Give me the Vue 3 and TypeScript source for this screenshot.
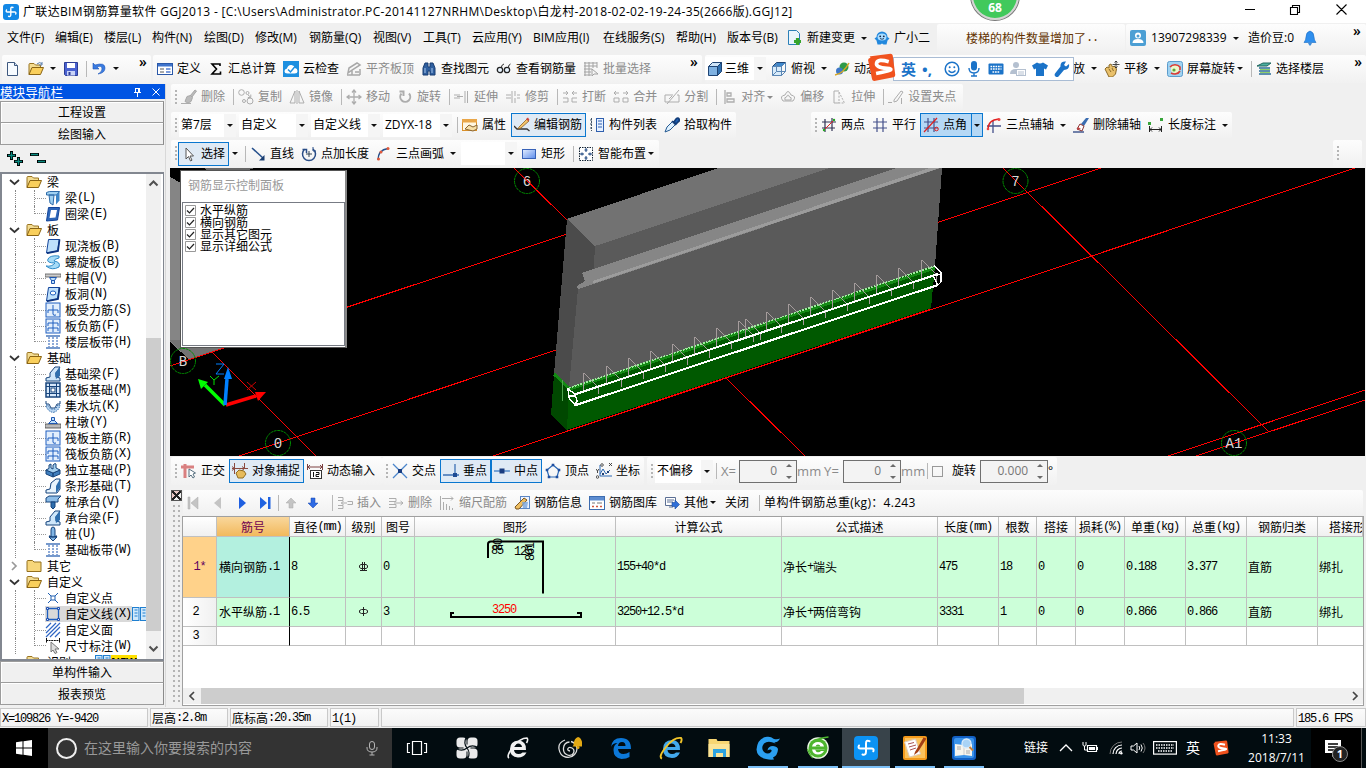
<script setup lang="ts">
import { h } from 'vue'

type Tool = {
  k: 'b' | 'sep' | 'combo' | 'gap' | 'more' | 'arr' | 'lab' | 'num' | 'check'
  i?: string
  t?: string
  w?: number
  on?: boolean
  hot?: boolean
  dis?: boolean
  a?: 'm' | 's'
}

const folder = '<path d="M1 13.5V3.5q0-1 1-1h4l1.5 1.5h5v3" fill="#f3dc92" stroke="#9a7420"/><path d="M1 13.5L4 6.500h11.500L12.500 13.500z" fill="#f9cf5c" stroke="#8a6414"/>'
const slab = '<path d="M3.5 1.5h11L12.5 13l-11 2z" fill="#bfe0fb" stroke="#12449a"/><path d="M14.5 1.5L13 13l-11 2.2" fill="none" stroke="#0d3480" stroke-width="1.8"/>'
const gridBox = '<rect x="1" y="1" width="14" height="14" fill="#e2eefc" stroke="#1f5fc0"/>'
const grid = '<path d="M5 1v14M11 1v14M1 5h14M1 11h14" stroke="#44508a" fill="none" stroke-width="1.2"/>'

const icons: Record<string, string> = {
  logo: '<rect width="16" height="16" rx="3" fill="#1388e6"/><path d="M10 3.500Q7.800 2.500 7.800 5v5.500q0 2.500-2.200 1.800M3.500 6q-1 2 1 2h7q2 0 1.200 2" fill="none" stroke="#fff" stroke-width="1.400" stroke-linecap="round"/>',
  newdoc: '<path d="M2.5 1.5h7l3 3v10h-10z" fill="#f7fbff" stroke="#3e587e"/><path d="M9.500 1.500v3h3" fill="#cfe0f4" stroke="#3e587e"/>',
  open: folder + '<path d="M9 3q3-3 5 0m0-2v3h-3" fill="none" stroke="#5b7fae"/>',
  save: '<path d="M1.500 1.500h13v13h-12l-1-1z" fill="#4a62d0" stroke="#2c3c94"/><path d="M4 2h8v5H4z" fill="#fff"/><path d="M4 10h8v4.500H4z" fill="#c9d3f7"/><path d="M5.500 11h2v3h-2z" fill="#2c3c94"/>',
  undo: '<path d="M2 2v6h6L6 6q5-2 5 2 0 3-4 5 7-1 7-6 0-6-10-3z" fill="#3a7be0" stroke="#1c55b8" stroke-width=".6"/>',
  define: '<rect x=".5" y="2.500" width="15" height="11" fill="#fff" stroke="#2a58a8"/><path d="M1 3h14v2.500H1z" fill="#3f74cc"/><path d="M3 8h4M3 11h4" stroke="#555"/><path d="M9 7h4.500v2H9zM9 10h4.500v2H9z" fill="#7d9ddc"/>',
  sigma: '<path d="M12 5V3H4l4.500 5L4 13h8.500v-2.500" fill="none" stroke="#000" stroke-width="1.600"/>',
  cloud: '<rect width="16" height="16" fill="#1d8fe0"/><path d="M4.500 12.500q-3 0-3-2.500 0-2 2.500-2.500Q5 3.500 8.500 4q3 .5 3.500 3 2.500.5 2.500 3t-3 2.500z" fill="#fff"/><path d="M5 8.500l2.500 2.500L12 5.500" fill="none" stroke="#1d8fe0" stroke-width="1.500"/>',
  align: '<path d="M2 12l1-5 8-5 3 2-8 5zM1 14h13M6 9v5M14 8v6M9 11h4" fill="none" stroke="#a8a8a8" stroke-width="1.500"/>',
  find: '<path d="M2 7l2-5h3v4h2V2h3l2 5v7h-5v-4H7v4H2z" fill="#2f5f9f" stroke="#183c70"/><path d="M4 7v5M11 7v5" stroke="#a9c8ee"/>',
  glasses: '<path d="M5 7Q6 3 8 3M12 7q1-4 2.500-4" fill="none" stroke="#333"/><circle cx="4" cy="9" r="2.700" fill="#e8f4ff" stroke="#222" stroke-width="1.300"/><circle cx="11" cy="9" r="2.700" fill="#e8f4ff" stroke="#222" stroke-width="1.300"/>',
  batch: '<path d="M1 2h13M1 5h13M1 8h8M1 11h7M1 14h7M2 1v14M6 1v14M10 1v6M14 1v6M9 8l6 5h-4l-2 2z" fill="none" stroke="#a2a2a2"/>',
  cube: '<path d="M1.500 5.500l4-4h9l-4 4z" fill="#cfe5f8" stroke="#1f4474"/><path d="M1.500 5.500h9v9h-9z" fill="#7fb2e2" stroke="#1f4474"/><path d="M10.500 5.500l4-4v9l-4 4z" fill="#2f6fae" stroke="#1f4474"/>',
  topview: '<path d="M1.500 5.500l4-4h9l-4 4z" fill="#3f88cc" stroke="#1f4474"/><path d="M2 6h8v8H2z" fill="#d8ebfa"/><path d="M1.500 5.500h9v9h-9zM10.500 5.500l4-4v9l-4 4zM5.500 2v8.500h9M5.500 10.500l-4 4" fill="none" stroke="#5a86b4"/>',
  orbit: '<circle cx="10" cy="6" r="4.500" fill="#2f9a48"/><circle cx="5.500" cy="10" r="3.500" fill="#3e78c8"/><path d="M1 14Q9 13 15 2" fill="none" stroke="#d9a820" stroke-width="1.500"/>',
  hand: '<path d="M1 8l2-2 2 1 0-3 2-1 1.500 3 2-1 2 3-1 5-3 3H5z" fill="#e9c06a" stroke="#8b6a28"/><path d="M5 8l2 3M8 7l1.500 3" stroke="#8b6a28"/><path d="M12 0v7M8.500 3.500h7M10.500 1.500L12 0l1.500 1.500M10.500 5.500L12 7l1.500-1.500" fill="none" stroke="#333" stroke-width=".9"/>',
  spin: '<rect x=".5" y=".5" width="15" height="15" rx="2" fill="#9fd3f2" stroke="#5c9ccc"/><circle cx="8" cy="8" r="4" fill="#eef6c8"/><path d="M3 6a6 5 0 0 1 10 0v3M13 10a6 5 0 0 1-9 2" fill="none" stroke="#dd3b32" stroke-width="1.600"/><circle cx="7" cy="9" r="1.600" fill="#5ba53c"/>',
  floors: '<path d="M1 5l6-3h8l-4 3z" fill="#4db0a0" stroke="#1f665e"/><path d="M3 7h11M3 10h11M3 13h12" stroke="#2b6d98" stroke-width="1.600"/><path d="M4 8.500h10M4 11.500h10" stroke="#8fd06a"/>',
  change: '<path d="M1.500.5h8l3 3v11h-11z" fill="#eaf5fd" stroke="#2b80b8"/><path d="M10.500 8v7M7 11.500h7" stroke="#36a52c" stroke-width="3.200"/>',
  robot: '<path d="M2.500 7a5.500 5.500 0 0 1 11 0l2 1.500-2 2-1 4H9.500l-1.500-1-1.500 1h-3l-1-4-2-2z" fill="#2288dd"/><ellipse cx="8" cy="7" rx="4.500" ry="3.500" fill="#a9dcff"/><circle cx="6.200" cy="6.300" r=".9" fill="#124"/><circle cx="9.800" cy="6.300" r=".9" fill="#124"/><path d="M6 8.500q2 1.500 4 0" fill="none" stroke="#124" stroke-width=".8"/>',
  user: '<rect width="16" height="16" rx="2" fill="#4c9fd4"/><circle cx="8" cy="5.500" r="3" fill="#fff"/><path d="M2.500 13q0-4 5.500-4t5.500 4z" fill="#fff"/><circle cx="8" cy="6" r="1.500" fill="#4c9fd4"/>',
  bell: '<path d="M8 1q4 1 4 6 0 3 2 5.500H2Q4 10 4 7q0-5 4-6zM6.500 13.500h3L8 15.500z" fill="#2f8fee" stroke="#176cc4" stroke-width=".6"/>',
  brush: '<path d="M0 14.500h10" /><path d="M9 7l5-6 1.500 1-4.500 6M4 12.500l2-5 3.500-1 2 2-1.500 4-3 1.500z" fill="#bbb" stroke="#a8a8a8"/>',
  copy: '<circle cx="3.500" cy="3.500" r="2.800"/><circle cx="9.500" cy="4" r="1.500"/><circle cx="12" cy="12" r="3"/><circle cx="6" cy="12" r="1.500"/><path d="M10 6l2.500 2M12.800 5.500v3h-3"/>',
  mirror: '<path d="M6 2v12H1zM10 2v12h5zM8 1v14"/>',
  move: '<path d="M8 2v12M2 8h12M6 3.500L8 1l2 2.500M6 12.500L8 15l2-2.500M3.500 6L1 8l2.500 2M12.500 6L15 8l-2.500 2" stroke-width="1.300"/>',
  rotate: '<path d="M4.500 4.500a5 5 0 1 0 7.500 0M2.500 2.500h4V7" stroke-width="2"/>',
  extend: '<path d="M0 6h6M0 9h6M3 7.500h6M11 2v12M13.500 2v12"/>',
  trim: '<path d="M1 6h5M1 9h5M7 2v12M10 2v5M10 9v5M12 6h3M12 9h3"/>',
  split: '<path d="M1 4h5l-2-2M6 4L4 6M15 4h-5l2-2M10 4l2 2M1 9h5v4H1M15 9h-5v4h5"/>',
  merge: '<path d="M6 4H1l2-2M1 4l2 2M10 4h5l-2-2M15 4l-2 2M1 9h5v4H1zM15 9h-5v4h5z"/>',
  divide: '<path d="M1 6h8M13 6h2M1 6v7h14V6M3 15L15 1M5 10l3-3"/>',
  alignl: '<path d="M4 1v14M6 4h4v3H6zM6 10h7v3H6z" stroke-width="1.300"/>',
  offset: '<path d="M3 12q-4-5 2-6 3-7 6 0 6 1 2 6zM5 11q-1-3 1.500-3 1.500-4 3 0Q12 8 11 11z"/>',
  stretch: '<path d="M8 2H3v12h5"/><path d="M8 3l5.500 11H8V3" stroke-dasharray="2 1.300"/>',
  grip: '<path d="M0 13.500h4M13.500 9v6M6 11l7-9 2 1-6 9-3 1z"/>',
  props: '<rect x=".5" y="2.500" width="14" height="11" fill="#fff6e0" stroke="#d9902a"/><path d="M0 2h15v3.500H0z" fill="#e9a648"/><path d="M3 12l4-4 4 2 4-2v4l-4 2z" fill="#f7e0a8" stroke="#8a6430"/>',
  editbar: '<path d="M0 9l3 3h10l2.500 2" stroke="#333" fill="none" stroke-width="1.300"/><path d="M5 10l8-8 2 2-8 7-3 1z" fill="#f3c46a" stroke="#8c5f24" stroke-width=".8"/><path d="M12 2l2-1.500L15.500 3 14 4z" fill="#d2423a"/>',
  list: '<path d="M1 3h3M1 7h3M1 11h3M2.500 1v13" stroke="#456" stroke-dasharray="2 1"/><rect x="7.500" y="1.500" width="7" height="13" fill="#e6f0ff" stroke="#2f5fae"/><path d="M9 4h4M9 7h4M9 10h4" stroke="#2f5fae"/>',
  pick: '<path d="M1 15l2-5 6-6 3 3-6 6z" fill="#dff1ff" stroke="#245a92"/><path d="M8 4l4 4M10 5l2-3q2-2 3 0t-1 3l-2 2z" stroke="#123c78" stroke-width="1.700" fill="#1d5fb4"/>',
  axis2: '<path d="M4 2v13M11 1v13M1 5h14M1 11h13" stroke="#335" fill="none" stroke-width="1.200"/><path d="M2 14L14 2" stroke="#e02020"/><circle cx="3" cy="13" r="1.200" fill="#2a2"/><circle cx="13" cy="3" r="1.200" fill="#2a2"/>',
  axisp: grid,
  axisa: grid + '<path d="M1 15L14 1" stroke="#e02020" stroke-width="1.200"/><circle cx="13.500" cy="12" r="1.800" fill="none" stroke="#e02020"/>',
  axis3: '<path d="M7 4v12M1 9h14" stroke="#44508a" stroke-width="1.300"/><path d="M2 12Q2 3 13 2" fill="none" stroke="#e02020" stroke-width="1.300"/><circle cx="2" cy="12" r="1.300" fill="#e44"/><circle cx="13" cy="2.500" r="1.500" fill="#e44"/>',
  erase: '<path d="M0 15h11" stroke="#445a90" stroke-width="1.500"/><path d="M8 7l5-6h3l-5 8z" fill="#3a6cb0"/><path d="M4 12l3-5 4 2-2 5z" fill="#fff" stroke="#833"/><path d="M4 13l1-3 3 2z" fill="#c04040"/>',
  dim: '<path d="M1.500 9v6M13.500 9v6M2 12.500h11M4 10.500l-2 2 2 2M11 10.500l2 2-2 2" fill="none" stroke="#222"/><path d="M0 5h3v3H0zM12 1h3v3h-3z" fill="#37a63a"/>',
  cursor: '<path d="M5 2v11l2.500-2.500L9.500 15l1.500-.8L9 10h3.500z" fill="#fff" stroke="#555"/>',
  line: '<path d="M2 2l11 10" stroke="#26508c" stroke-width="1.500"/><path d="M14.500 9v5.500H9z" fill="#183c70"/>',
  lenpt: '<path d="M4 3a6.500 6.500 0 1 0 8 0M1.500 3.500h4V7" fill="none" stroke="#284c86" stroke-width="1.500"/><path d="M8 5v6M5 8h6" stroke="#345"/><path d="M12 1v4h3" fill="none" stroke="#284c86"/>',
  arc: '<path d="M2 14Q2 4 12 2.500" fill="none" stroke="#26508c" stroke-width="1.400"/><circle cx="2.500" cy="13" r="1.500" fill="#e0583a"/><circle cx="5" cy="6" r="1.500" fill="#e0583a"/><circle cx="12" cy="2.500" r="1.500" fill="#e0583a"/>',
  rect: '<defs><linearGradient id="rg" x1="0" y1="0" x2="1" y2="1"><stop stop-color="#e4eeff"/><stop offset="1" stop-color="#5c8cec"/></linearGradient></defs><rect x="1.500" y="3.500" width="13" height="9" fill="url(#rg)" stroke="#3862b8"/>',
  smart: '<rect x="1.500" y="1.500" width="13" height="13" fill="#fff" stroke="#123" stroke-dasharray="1.500 1"/><path d="M8 2v4M6.500 4h3M8 10v4M6.500 12h3M2 8h4M4 6.500v3M10 8h4M12 6.500v3" stroke="#123c78"/>',
  ortho: '<path d="M4 1v14M0 4h13" stroke="#d98080" stroke-width="3"/><path d="M8 6v8l2-2 2 3 1.500-1-1.500-3 2.500-1z" fill="#fff" stroke="#577080"/>',
  snap: '<path d="M2.500 0v11M12.500 0v6M0 5.500h16M0 3.500l2.500 2-2.500 2M10 3.500l2.500 2-2.500 2" fill="none" stroke="#8a4a40"/><path d="M4 10l3-3 5 1 2 3-3 4H6z" fill="#e6bb5c" stroke="#916d22"/>',
  dyn: '<path d="M.5 1v6M15.500 1v6M1 4h14M3 2L1 4l2 2M13 2l2 2-2 2" fill="none" stroke="#7c4040"/><rect x="3.500" y="7.500" width="11" height="8" fill="#fff" stroke="#333"/><path d="M6.500 9v5M9 9.500h3v2H9v2h3" fill="none" stroke="#111"/>',
  cross: '<path d="M1 1l14 14M15 1L1 15" stroke="#4c86cc" stroke-width="1.300"/><rect x="6" y="6" width="4" height="4" fill="#183c80"/>',
  perp: '<path d="M0 12h16M12 1v11" stroke="#3c70b4" stroke-width="1.300"/><rect x="10" y="10" width="4" height="4" fill="#1d4b94"/>',
  mid: '<path d="M0 8h16" stroke="#5c90cc" stroke-width="1.600"/><rect x="5.500" y="5.500" width="5" height="5" fill="#183c80"/>',
  vertex: '<path d="M8 2l6 5-2 7H4L2 7z" fill="none" stroke="#2c68b4" stroke-width="1.200"/><path d="M6.700 .7h2.600v2.600H6.700zM.7 5.700h2.600v2.600H.7zM12.700 5.700h2.600v2.600h-2.600zM2.700 12.700h2.600v2.600H2.700zM10.700 12.700h2.600v2.600h-2.600z" fill="#1f4fa0"/>',
  coord: '<path d="M4 2v11h12M4 11l3-5 3 5 4-4" fill="none" stroke="#2c68b4"/><path d="M6 10h2v2H6zM11 8h2v2h-2z" fill="#1f3f74"/><path d="M0 6l1.500 2L3 6M1.500 8v2M13 0l3 3M16 0l-3 3" fill="none" stroke="#333" stroke-width=".9"/><circle cx="6" cy="2" r="1.300" fill="none" stroke="#333" stroke-width=".8"/><circle cx="1.500" cy="14" r="1.300" fill="none" stroke="#333" stroke-width=".8"/>',
  first: '<path d="M3 2h2v12H3zM13 2v12L6 8z" fill="#c4c4c4" stroke="#adadad" stroke-width=".5"/>',
  prev: '<path d="M11 2v12L4 8z" fill="#c4c4c4"/>',
  next: '<path d="M5 2v12l7-6z" fill="#1f5fe0"/>',
  last: '<path d="M3 2v12l7-6zM11 2h2.500v12H11z" fill="#1f62e0"/>',
  up: '<path d="M8 3l5 5h-3v5H6V8H3z" fill="#c4c4c4" stroke="#aaa" stroke-width=".5"/>',
  down: '<path d="M8 13l5-5h-3V3H6v5H3z" fill="#2e6ae4" stroke="#1a48ae" stroke-width=".5"/>',
  ins: '<path d="M1 2.500h5v3H1M1 10.500h5v3H1M10.500 6.500h5v3h-5M4 8h6M6.500 6L4.500 8l2 2"/>',
  del: '<path d="M1 3.500h7v3H1M1 9.500h7v3H1M6 8h9M12.500 6L15 8l-2.500 2"/>',
  scale: '<path d="M1.500 1v14M3 3.500h11M12 1.500l2 2-2 2M4.500 7v8M7.500 9v6M10.500 11v4M13.500 13v2"/>',
  info: '<rect x="6.500" y="1.500" width="9" height="12" fill="#eef4ff" stroke="#5b86c4"/><path d="M1 12l9-9 3 2-8 9H2z" fill="#efbf62" stroke="#7c5620"/><path d="M8 7h6l-1 6H9z" fill="#7ba5dc" opacity=".8"/>',
  lib: '<rect x=".5" y="1.500" width="15" height="13" fill="#fff" stroke="#3c6cb0"/><path d="M1 2h14v3.500H1z" fill="#5c8cd0"/><path d="M3 8h3M8 8h5" stroke="#777"/><path d="M3 11.500h2M7 11.500h2M11 11.500h2" stroke="#d05840" stroke-width="1.500"/>',
  other: '<path d="M1.500 2.500h10v8h-10z" fill="#fff" stroke="#5b6f94"/><path d="M3 5h7M3 7h6M5 12h4" stroke="#5b6f94"/><path d="M8 7.500h3V5l4.500 4.500L11 14v-2.500H8z" fill="#2f6fd8" stroke="#174a9c" stroke-width=".6"/>',
  folder,
  folderc: '<path d="M1 13.500V3.500q0-1 1-1h4.500L8 4h7v9.500z" fill="#f7d67a" stroke="#94701e"/>',
  beam: '<path d="M1.500 2.500l3-1h10l-3 3.500h-10zM4 5h5l-1 10-3-2z" fill="#9fd1f2" stroke="#2d6aa8"/><path d="M11 5l3.500-3.500v9L11 14.500z" fill="#3d85c6"/>',
  ring: '<path d="M3.500 1.500h11L12.500 14l-11 1z" fill="#2e66b8" stroke="#12449a"/><path d="M6 4h6l-1.500 7.500-6 .5z" fill="#fff"/>',
  slab,
  spiral: '<path d="M14 2Q5 1 3 5t7 4q-3 4-9 3 6 5 13 1 2-5-5-6 0-2 5-3z" fill="#a5dbf7" stroke="#2e8bc9"/>',
  cap: '<path d="M0 4h16v3H0z" fill="#ccc" stroke="#555" stroke-width=".8"/><path d="M4.500 7.500h7l-2 3h-3zM6.500 10.500h3v3h-3z" fill="#bfe0fb" stroke="#1f57b0"/>',
  hole: slab + '<ellipse cx="8" cy="7" rx="2.800" ry="2" fill="#fff" stroke="#1f5fc0"/>',
  mainbar: gridBox + '<path d="M3 8h10M8 3v9q0 2 3 1M3 8v3M13 8v3" fill="none" stroke="#1f5fc0"/>',
  negbar: gridBox + '<path d="M3 5h10M3 5v3M13 5v3M3 10h10M3 10v3M13 10v3M8 2v12" fill="none" stroke="#1f5fc0"/>',
  band: '<path d="M1 2h14M1 14h14" stroke="#4a78bc" stroke-width="1.600"/><path d="M4 3v10M12 3v10M8 3v10" stroke="#1f57b0" stroke-dasharray="2 1"/>',
  fbeam: '<path d="M5 7l5-6h5l-4 6v4l4 1v3H1v-3l4-1z" fill="#cfe7fa" stroke="#17447c"/><path d="M10 7l5-6v9l-4 3z" fill="#2f6fae"/>',
  raft: '<rect x="1" y="1" width="14" height="14" fill="#d7e8fa" stroke="#17447c" stroke-width="1.500"/><path d="M4.500 1v14M11.500 1v14M1 4.500h14M1 11.500h14" stroke="#17447c"/><rect x="6" y="6" width="4" height="4" fill="#fff" stroke="#17447c"/>',
  pit: '<path d="M1 3v3h3l2 4h4l2-4h3V3" fill="none" stroke="#17447c"/><path d="M1 7h2l2.500 4h5L13 7h2q-1 6-7 7.500Q2 13 1 7z" fill="#b7d4f0" stroke="#2b68aa" stroke-dasharray="1.500 1"/>',
  pier: '<path d="M0 10h16v4H0z" fill="#bbb" stroke="#444" stroke-width=".8"/><path d="M6.500 3.500h3v3h-3zM6.500 6.500h3l3 3h-9z" fill="#bfe0fb" stroke="#1f57b0"/>',
  single: '<path d="M1 8l7 3v4l-7-3zM15 8l-7 3v4l7-3z" fill="#3f7fbe" stroke="#17447c"/><path d="M1 8l3-1.500V3l2-1v4l2 1V3l2-1.500 1 .5v4l4 2-7 3z" fill="#a5d0f0" stroke="#17447c"/>',
  strip: '<path d="M1 15v-3l4-1 1-6 5-4h4v10l-3 4z" fill="#e8f4fd" stroke="#17447c"/><path d="M11 8l4-7v9l-4 5z" fill="#2f6fae"/>',
  pilecap: '<path d="M1 4l3-2h12l-3 3v3H1z" fill="#8dbde8" stroke="#17447c"/><path d="M6 8h4v5l-2 2-2-2z" fill="#2f6fae" stroke="#17447c"/>',
  pile: '<path d="M6 4q0-3 2-3t2 3v7h2l-4 4-4-4h2z" fill="#7fb4e4" stroke="#17447c"/><path d="M4 10q4 2 8 0" fill="none" stroke="#17447c" stroke-width="1.500"/>',
  cpoint: '<path d="M3 3l10 10M13 3L3 13" stroke="#1f5fb0"/><rect x="6" y="6" width="4" height="4" fill="#fff" stroke="#1f5fb0"/>',
  cline: '<path d="M2.500 2.500h11v11h-11z" fill="none" stroke="#1f5fc0" stroke-width="1.300"/><path d="M1.500 1.500h2v2h-2zM12.500 1.500h2v2h-2zM1.500 12.500h2v2h-2zM12.500 12.500h2v2h-2z" fill="#d8e8ff" stroke="#1f4fb0"/>',
  cface: '<path d="M1 6l5-5M1 11L11 1M1 15L15 1M5 15L15 5M10 15l5-5" stroke="#2f66c4" stroke-width="1.200"/>',
  cdim: '<path d="M1.500 0v5M14.500 0v5M1 2.500h14" stroke="#111" stroke-dasharray="2 .6"/><path d="M6 4v10l2-2 2 3.500 2-1L10 11h4z" fill="#ddd" stroke="#777"/>',
  pane: '<rect x=".5" y="1.500" width="6.500" height="13" fill="#cfe8fb" stroke="#1f7fd0"/><rect x="8.500" y="1.500" width="6.500" height="13" fill="#cfe8fb" stroke="#1f7fd0"/><path d="M2.500 4h3M2.500 7h3M2.500 10h3M10.500 4h3M10.500 7h3M10.500 10h3" stroke="#1f7fd0"/>',
  win: '<path d="M0 2.200L6.500 1.300V7.500H0zM7.500 1.200L16 0v7.500H7.500zM0 8.500h6.500v6.200L0 13.800zM7.500 8.500H16V16l-8.500-1.200z" fill="#fff"/>',
  smic: '<rect x="5.500" y="1.500" width="5" height="8" rx="2.500" fill="none" stroke="#b5b5b5"/><path d="M3 7v1q0 4 5 4t5-4V7M8 12v3M5.500 15h5" fill="none" stroke="#b5b5b5"/>',
  up2: '<path d="M2 11l6-6 6 6" fill="none" stroke="#fff" stroke-width="1.300"/>',
  batt: '<path d="M5.500 5.500h9v6h-9zM15.500 7v3" fill="none" stroke="#fff" stroke-width="1.200"/><path d="M7 7h6v3H7z" fill="#fff"/><path d="M1 2v3q0 1 1.500 1T4 5V2M2.500 6v4H5" fill="none" stroke="#fff"/>',
  wifi: '<path d="M2 14A12 12 0 0 1 14 2" fill="none" stroke="#777"/><path d="M5 14a9 9 0 0 1 9-9M8 14a6 6 0 0 1 6-6M11 14a3 3 0 0 1 3-3" fill="none" stroke="#fff" stroke-width="1.200"/><circle cx="13.300" cy="13.300" r="1.200" fill="#fff"/>',
  sound: '<path d="M1 6h2.500L7 3v10L3.500 10H1z" fill="none" stroke="#fff"/><path d="M9 6q1.500 2 0 4M11 4.500q2.500 3.500 0 7" fill="none" stroke="#fff"/><path d="M13 3q4 5 0 10" fill="none" stroke="#777"/>',
  sogou: '<path d="M2 2.500Q1 2 2 1.800L13 .4q1 0 1.200 1l1.400 10.800q0 1-1 1.200L4 15.500q-1 0-1.200-1L.6 4q0-1 1-1.200z" fill="#f0521e"/><path d="M12 4.800Q6 3 5.300 5.500T11 8.500 5 11.300" fill="none" stroke="#fff" stroke-width="2"/>',
  smile: '<circle cx="8" cy="8" r="6.800" fill="none" stroke="#1b73c8" stroke-width="1.500"/><circle cx="5.700" cy="6.300" r="1" fill="#1b73c8"/><circle cx="10.300" cy="6.300" r="1" fill="#1b73c8"/><path d="M4.500 9.500q3.500 4 7 0" fill="none" stroke="#1b73c8" stroke-width="1.300"/>',
  bmic: '<rect x="5" y="0" width="6" height="9.500" rx="3" fill="#1b73c8"/><path d="M3 7q0 5 5 5t5-5M8 12v3M5 15h6" fill="none" stroke="#1b73c8" stroke-width="1.400"/>',
  bkey: '<rect x=".5" y="2.500" width="15" height="11" rx="1" fill="#1b73c8"/><path d="M2.500 5.500h11M2.500 8h11M4.500 11h7" stroke="#fff" stroke-width="1.300" stroke-dasharray="1.700 .8"/>',
  person: '<circle cx="6" cy="4" r="3" fill="#b4c0d0"/><path d="M0 13q0-5 6-5 3 0 4 1v4z" fill="#b4c0d0"/><rect x="6.500" y="8.500" width="9" height="6" fill="#fff" stroke="#b4c0d0"/><path d="M8 11h6M8 13h6" stroke="#b4c0d0"/>',
  shirt: '<path d="M5 1.500q3 2 6 0l5 3-2 4-2-1v7.500H4V7.500l-2 1-2-4z" fill="#1b73c8"/>',
  wrench: '<path d="M15 3l-3 2.500-2-1.500 2-3.500q-6-.5-5.500 5L1 12.500q-1 2 .5 3t3 0L10 9q6-.5 5-6z" fill="#1b73c8"/>',
  t_view: '<path d="M7.500 5.500h9v13h-9zM5 7.500H2.500v9H5M19 7.500h2.500v9H19" fill="none" stroke="#fff" stroke-width="1.200"/>',
  t_fan: '<g fill="#ebebeb"><rect x="1.500" y="1.500" width="10" height="10" rx="3.500"/><rect x="12.500" y="1.500" width="10" height="10" rx="3.500"/><rect x="1.500" y="12.500" width="10" height="10" rx="3.500"/><rect x="12.500" y="12.500" width="10" height="10" rx="3.500"/><rect x="8.500" y="8.500" width="7" height="7"/></g><path d="M12 12Q8 7 11.500 1M12 12q5-4 11-.5M12 12q4 5 .5 11M12 12q-5 4-11 .5" stroke="#051015" stroke-width="1.200" fill="none"/>',
  t_ie: '<path d="M20 14H8q.5 4 4.500 4 2.500 0 4-1.500h4Q18 21.500 12 21.500 4 21 4 13t8.500-8.500Q20.500 5 20 14zM8 11h8q-.5-3.500-4-3.500T8 11z" fill="#f2f2f2"/><path d="M3 22Q0 20 7 11T21 2q1.500 1.500-.5 5" fill="none" stroke="#f2f2f2" stroke-width="1.600"/>',
  t_swirl: '<path d="M12 15q-3-.5-2-2.500t4-.5 1.500 5-6 2-4-7 6-6M13 5.500q4 1 5.500 5t-2 8-9 2.500-6.500-8 6-9" fill="none" stroke="#ddd" stroke-width="1.300"/><path d="M15.500 9q.5-7 4.500-8 4 1 4.500 8l1 1.500h-11z" fill="#e3a913"/><circle cx="20" cy="11.500" r="1.500" fill="#e3a913"/>',
  t_edge: '<path d="M2 11Q3 2 12 2q10 0 10 11H9q.5 5 5.500 5 3 0 6-2v5q-3 2-8 2-8-1-8-9 0-5 4-7-5 0-6.500 4zM9 10h7.500q0-4-3.500-4T9 10z" fill="#0c78d8"/>',
  t_ie2: '<path d="M21 14H8.500q.5 4 4.500 4 2.500 0 4-1.500h4Q18.500 22 13 22q-9-.5-9-9t9-9q8.500.5 8 10zM8.500 11h8q-.5-3.500-4-3.500t-4 3.500z" fill="#43a9ec"/><path d="M3 22.500Q-1 21 7 11T22 2q1.500 1.500-.5 5" fill="none" stroke="#f2c52a" stroke-width="1.900"/>',
  t_file: '<path d="M1.500 3h8l1 2h12v16h-21z" fill="#f7d673"/><path d="M1.500 8h21v13h-21z" fill="#fbe497"/><path d="M6 13h13v8h-3v-4H9v4H6z" fill="#2da3e0"/>',
  t_g: '<path d="M24 2.500Q22 7 17.500 6q2 .8 2 1.500Q12 4 8 7.500 4.500 12 8 16q4 3 7 0 1.500-2-.5-2.500-2 0-3 1Q12 10 17 10q5 .5 5 3.500-.5 6-5 8l1 2q-4 .5-8-.5Q1 21 .5 13.500 1.500 2 11 .8q4-.5 6.500 2Q21 4 24 2.500z" fill="#2b9ff0"/>',
  t_green: '<circle cx="12" cy="12" r="10.800" fill="#eef8e8"/><circle cx="12" cy="12" r="9.500" fill="#4db52e"/><path d="M6 10.500Q7 6 12 6t6 4.500zM6 13.500h12.500Q17 18.500 12 18.500T6 13.500z" fill="#fff"/><path d="M9.500 10.500Q10 8.500 12 8.500t2.500 2zM9 13.500q1 2.700 3 2.700t3-1.200h3.500v-1.500z" fill="#4db52e"/><path d="M1.500 13Q4 20 7 22M22.500 1Q12 2 8 6" fill="none" stroke="#4db52e" stroke-width="1.300"/>',
  t_ggj: '<rect x="0" y="0" width="24" height="24" rx="4" fill="#0c93f4"/><path d="M15.500 5.200Q12 3.500 12 7.500v8q0 4-3.500 3M5 9.500q-1.500 3 1.500 3h11q3 0 1.800 2.800" fill="none" stroke="#fff" stroke-width="2" stroke-linecap="round"/>',
  t_note: '<rect width="24" height="24" rx="2" fill="#f39a1c"/><rect x="2" y="2" width="20" height="20" fill="#fbc25c"/><path d="M1.500 6l11-3 5 15-11 3z" fill="#fff" stroke="#dcb"/><path d="M5 8l6-1.500M6 11l7-2M7 14l6-2" stroke="#a55"/><path d="M12 16L20.500 1.500l3 1L15 16l-4 3z" fill="#a43f14"/>',
  t_doc: '<rect width="24" height="24" rx="3" fill="#1260c4"/><rect x="2" y="2" width="20" height="20" rx="2" fill="#3a93ea"/><path d="M3 8l9 1 8-1v12l-8-1-9 1z" fill="#f7f5ee"/><path d="M12 9v10" stroke="#ccc"/><path d="M5 11h4M5 13h4M14 15h4M14 17h4" stroke="#aaa"/><circle cx="14.500" cy="7.500" r="4.500" fill="#a9d3f6" stroke="#dcecfa" stroke-width="1.300"/><path d="M17.500 11l3.500 3.500" stroke="#c8803a" stroke-width="2"/>',
  t_key: '<rect x=".6" y="5.600" width="22.800" height="12.500" fill="none" stroke="#fff" stroke-width="1.200"/><path d="M3 9h18M3 12h18M5 15h14" stroke="#fff" stroke-width="1.300" stroke-dasharray="1.500 1"/>',
  t_msg: '<path d="M4 4h16v13h-5l-4 4v-4H4z" fill="#fff"/><path d="M7 8h10M7 11h10M7 14h6" stroke="#000" stroke-width="1.300"/>',
}

const Ico = (p: { n: string; s?: number }) =>
  h('svg', { class: 'ico', viewBox: `0 0 ${p.s ?? 16} ${p.s ?? 16}`, width: p.s ?? 16, height: p.s ?? 16, innerHTML: icons[p.n] ?? '' })
Ico.props = ['n', 's']

/* Full-width glyphs keep 12px, half-width runs are set on a 6px pitch. */
const Song = (p: { t: string }) =>
  h('span', { class: 'song' }, (p.t.match(/[\x20-\x7e]+|[^\x20-\x7e]+/g) ?? []).map((r) =>
    h(/[\x20-\x7e]/.test(r[0]) ? 'i' : 'b', r)))
Song.props = ['t']

const Tools = (p: { items: Tool[] }) => p.items.map((x) => {
  const width = x.w ? { width: x.w + 'px' } : undefined
  if (x.k === 'sep') return h('span', { class: 'tsep' })
  if (x.k === 'gap') return h('span', { class: 'tgap', style: width })
  if (x.k === 'more') return h('span', { class: 'tmore', style: width }, '»')
  if (x.k === 'arr') return h('span', { class: 'tarr', style: width }, [h('u', { class: 'tri' })])
  if (x.k === 'lab') return h('span', { class: ['tlab', { dis: x.dis, wide: !x.w }], style: width }, x.t)
  if (x.k === 'check') return h('span', { class: 'tcheck' })
  if (x.k === 'num') return h('span', { class: 'tnum', style: width }, [h('span', x.t), h('em', [h('u', { class: 'tri up' }), h('u', { class: 'tri' })])])
  if (x.k === 'combo') return h('span', { class: 'tcombo', style: width }, [x.i ? h(Ico, { n: x.i }) : null, h('span', x.t), h('em', [h('u', { class: 'tri' })])])
  return h('span', { class: ['tbtn', { on: x.on, hot: x.hot, dis: x.dis }, x.a], style: width }, [
    x.i ? h(Ico, { n: x.i }) : null,
    x.t ? h('span', x.t) : null,
    x.a ? h(x.hot ? 'em' : 'span', [h('u', { class: 'tri' })]) : null,
  ])
})
Tools.props = ['items']

const b = (i: string, t: string, o: Partial<Tool> = {}): Tool => ({ k: 'b', i, t, ...o })
const d = (i: string, t: string, o: Partial<Tool> = {}): Tool => b(i, t, { dis: true, ...o })
const sep: Tool = { k: 'sep' }
const gap = (w: number): Tool => ({ k: 'gap', w })

const menus = [
  ['文件(F)', 48], ['编辑(E)', 49], ['楼层(L)', 48], ['构件(N)', 52], ['绘图(D)', 51], ['修改(M)', 54], ['钢筋量(Q)', 64],
  ['视图(V)', 50], ['工具(T)', 49], ['云应用(Y)', 61], ['BIM应用(I)', 70], ['在线服务(S)', 73], ['帮助(H)', 51], ['版本号(B)', 60],
] as const

const fileTools: Tool[] = [b('newdoc', '', { w: 23 }), b('open', '', { a: 's', w: 35 }), b('save', '', { w: 22 }), { k: 'sep' }, b('undo', '', { a: 's', w: 48 }), { k: 'more' }]
const mainTools: Tool[] = [gap(4), b('define', '定义'), b('sigma', '汇总计算'), b('cloud', '云检查'), d('align', '平齐板顶'), b('find', '查找图元'), b('glasses', '查看钢筋量'), d('batch', '批量选择', { w: 107 }), { k: 'more' }]
const viewTools: Tool[] = [{ k: 'combo', i: 'cube', t: '三维', w: 61 }, gap(5), b('topview', '俯视', { a: 's' }), b('orbit', '动态观察', { w: 207 }), b('hand', '缩放', { a: 's' }), b('hand', '平移', { a: 's' }), b('spin', '屏幕旋转', { a: 'm' }), sep, b('floors', '选择楼层')]
const modifyTools: Tool[] = [
  d('brush', '删除'), sep, d('copy', '复制'), d('mirror', '镜像'), sep, d('move', '移动'), d('rotate', '旋转'), sep, d('extend', '延伸'), d('trim', '修剪'), sep,
  d('split', '打断'), d('merge', '合并'), d('divide', '分割'), sep, d('alignl', '对齐', { a: 'm' }), d('offset', '偏移'), d('stretch', '拉伸'), sep, d('grip', '设置夹点'),
]
const compTools: Tool[] = [
  { k: 'combo', t: '第7层', w: 57 }, gap(3), { k: 'combo', t: '自定义', w: 69 }, gap(3), { k: 'combo', t: '自定义线', w: 69 }, gap(3), { k: 'combo', t: 'ZDYX-18', w: 69 }, gap(4),
  sep, b('props', '属性', { w: 52 }), b('editbar', '编辑钢筋', { on: true }), b('list', '构件列表'), b('pick', '拾取构件'),
]
const axisTools: Tool[] = [b('axis2', '两点'), b('axisp', '平行'), b('axisa', '点角', { hot: true, a: 's' }), b('axis3', '三点辅轴', { a: 's' }), b('erase', '删除辅轴'), b('dim', '长度标注', { a: 's', w: 84 })]
const drawTools: Tool[] = [
  b('cursor', '选择', { on: true }), { k: 'arr', w: 12 }, sep, b('line', '直线'), b('lenpt', '点加长度'), b('arc', '三点画弧', { a: 's', w: 85 }),
  { k: 'combo', t: '', w: 56 }, gap(4), b('rect', '矩形'), sep, b('smart', '智能布置', { a: 'm', w: 81 }),
]
const snapTools: Tool[] = [b('ortho', '正交'), b('snap', '对象捕捉', { on: true }), b('dyn', '动态输入')]
const pointTools: Tool[] = [b('cross', '交点'), b('perp', '垂点', { on: true }), b('mid', '中点', { on: true }), b('vertex', '顶点'), b('coord', '坐标', { w: 48 })]
const offsetTools: Tool[] = [
  { k: 'combo', t: '不偏移', w: 58 }, gap(2), sep, { k: 'lab', t: 'X=', w: 18, dis: true }, { k: 'num', t: '0', w: 58 }, { k: 'lab', t: 'mm', w: 27, dis: true },
  { k: 'lab', t: 'Y=', w: 19, dis: true }, { k: 'num', t: '0', w: 58 }, { k: 'lab', t: 'mm', w: 25, dis: true }, sep, { k: 'check' }, { k: 'lab', t: '旋转', w: 28 }, { k: 'num', t: '0.000', w: 68 }, { k: 'lab', t: '°', w: 9 },
]
const barTools: Tool[] = [
  b('first', '', { w: 25 }), b('prev', '', { w: 24 }), b('next', '', { w: 23 }), b('last', '', { w: 20 }), sep, b('up', '', { w: 22 }), b('down', '', { w: 26 }), sep,
  d('ins', '插入'), d('del', '删除'), d('scale', '缩尺配筋'), b('info', '钢筋信息'), b('lib', '钢筋图库'), b('other', '其他', { a: 'm', w: 61 }), { k: 'lab', t: '关闭', w: 33 }, sep, { k: 'lab', t: '单构件钢筋总重(kg)：4.243' },
]

type Node = { t: string; i: string; p?: boolean; shut?: boolean; last?: boolean; sel?: boolean }
const leaf = (i: string, t: string, o: Partial<Node> = {}): Node => ({ i, t, ...o })
const top = (t: string, shut = false): Node => ({ i: shut ? 'folderc' : 'folder', t, p: true, shut })
const tree: Node[] = [
  top('梁'), leaf('beam', '梁(L)'), leaf('ring', '圈梁(E)', { last: true }),
  top('板'), leaf('slab', '现浇板(B)'), leaf('spiral', '螺旋板(B)'), leaf('cap', '柱帽(V)'), leaf('hole', '板洞(N)'), leaf('mainbar', '板受力筋(S)'), leaf('negbar', '板负筋(F)'), leaf('band', '楼层板带(H)', { last: true }),
  top('基础'), leaf('fbeam', '基础梁(F)'), leaf('raft', '筏板基础(M)'), leaf('pit', '集水坑(K)'), leaf('pier', '柱墩(Y)'), leaf('mainbar', '筏板主筋(R)'), leaf('negbar', '筏板负筋(X)'), leaf('single', '独立基础(P)'),
  leaf('strip', '条形基础(T)'), leaf('pilecap', '桩承台(V)'), leaf('fbeam', '承台梁(F)'), leaf('pile', '桩(U)'), leaf('band', '基础板带(W)', { last: true }),
  top('其它', true), top('自定义'), leaf('cpoint', '自定义点'), leaf('cline', '自定义线(X)', { sel: true }), leaf('cface', '自定义面'), leaf('cdim', '尺寸标注(W)', { last: true }),
]

const heads = ['', '筋号', '直径(mm)', '级别', '图号', '图形', '计算公式', '公式描述', '长度(mm)', '根数', '搭接', '损耗(%)', '单重(kg)', '总重(kg)', '钢筋归类', '搭接形']
const rows = [
  ['1*', '横向钢筋.1', '8', '', '0', '', '155+40*d', '净长+端头', '475', '18', '0', '0', '0.188', '3.377', '直筋', '绑扎'],
  ['2', '水平纵筋.1', '6.5', '', '3', '', '3250+12.5*d', '净长+两倍弯钩', '3331', '1', '0', '0', '0.866', '0.866', '直筋', '绑扎'],
  ['3', '', '', '', '', '', '', '', '', '', '', '', '', '', '', ''],
]
const checks = ['水平纵筋', '横向钢筋', '显示其它图元', '显示详细公式']
const ticks = [[584, 373], [607, 366], [629, 358], [651, 351], [673, 344], [695, 337], [717, 328], [739, 321], [746, 319], [767, 312], [789, 304], [811, 297], [833, 290], [855, 283], [877, 275], [899, 268], [922, 260]]
const tickPath = ticks.map(([x, y]) => `M${x - 1} ${y + 18}L${x} ${y}l14 14v7`).join('')
const bubbles = [[183, 361, 'B'], [278, 443, '0'], [527, 181, '6'], [1015.5, 181, '7'], [1234, 443, 'A1']] as const
const apps = [
  { n: 't_view', w: 49 }, { n: 't_fan', w: 51 }, { n: 't_ie', w: 52 }, { n: 't_swirl', w: 52 }, { n: 't_edge', w: 50 }, { n: 't_ie2', w: 49 }, { n: 't_file', w: 48 },
  { n: 't_g', w: 50, run: true }, { n: 't_green', w: 49, run: true }, { n: 't_ggj', w: 48, act: true }, { n: 't_note', w: 49, run: true }, { n: 't_doc', w: 49, run: true },
]
</script>

<template>
  <div class="win">
    <header class="title">
      <Ico n="logo" /><span class="ttext">广联达BIM钢筋算量软件 GGJ2013 - [C:\Users\Administrator.PC-20141127NRHM\Desktop\白龙村-2018-02-02-19-24-35(2666版).GGJ12]</span>
      <svg class="winbtns" width="102" height="12" viewBox="0 0 102 12"><path d="M0 5.500h10M45.500 3.500h7v7h-7zM47.500 3v-1.500h7v7H53M91.500 .5l10 10M101.500 .5l-10 10" fill="none" stroke="#000" stroke-width="1.100" /></svg>
      <span class="ball">68</span>
    </header>

    <nav class="menu">
      <span v-for="m in menus" :key="m[0]" class="mi" :style="{ width: m[1] + 'px' }">{{ m[0] }}</span>
      <Tools :items="[b('change', '新建变更', { a: 's' }), b('robot', '广小二')]" />
      <div class="grp notice"><Song t="楼梯的构件数量增加了.." /></div>
      <div class="grp account">
        <Ico n="user" /><span class="phone">13907298339</span><u class="tri"></u><span class="bean">造价豆:0</span><Ico n="bell" /><span class="tmore">»</span>
      </div>
    </nav>

    <div class="row r1">
      <div class="grp g1"><Tools :items="fileTools" /></div>
      <div class="grp g2"><Tools :items="mainTools" /></div>
      <div class="grp g3"><Tools :items="viewTools" /><span class="tmore">»</span></div>
    </div>

    <div class="body">
      <aside>
        <div class="ahead"><span>模块导航栏</span><svg width="30" height="10" viewBox="0 0 30 10"><path d="M4.500 1v4M8.500 1v4M4 1.500h5M3 5.500h7M6.500 6v4M7.500 1v4M21.500 1.500l7 7M28.500 1.500l-7 7" stroke="#fff" fill="none" /></svg></div>
        <div class="abtn"><Song t="工程设置" /></div>
        <div class="abtn"><Song t="绘图输入" /></div>
        <div class="pm"><svg width="42" height="16" viewBox="0 0 42 16"><path d="M4.500 0v9M0 4.500h9M11.500 6v9M7 10.500h9M23 3.500h9M30 10.500h9" stroke="#000" stroke-width="3" /><path d="M4.500 1v7M1 4.500h7M11.500 7v7M8 10.500h7M24 3.500h7M31 10.500h7" stroke="#0a8a80" stroke-width="1.300" /></svg></div>
        <div class="tree">
          <div class="nodes">
            <div v-for="(n, k) in tree" :key="k" class="node" :class="{ par: n.p, last: n.last, sel: n.sel }">
              <template v-if="n.p">
                <svg class="chev" width="23" height="16" viewBox="0 0 23 16"><path :d="n.shut ? 'M9 4l4 4-4 4' : 'M7 6l4.500 4L16 6'" fill="none" :stroke="n.shut ? '#999' : '#333'" stroke-width="1.700" /></svg>
              </template>
              <template v-else><i class="v0"></i><i class="v1"></i><i class="v2"></i></template>
              <span class="cell"><Ico :n="n.i" /><Song :t="n.t" /></span>
              <Ico v-if="n.sel" n="pane" class="mk" />
            </div>
            <div class="node par cut"><span class="pad"></span><span class="cell"><Ico n="folder" /><Song t="识别" /></span><Ico n="pane" class="mk" /><span class="new">NEW</span></div>
          </div>
          <div class="vbar">
            <svg width="15" height="16" viewBox="0 0 15 16"><path d="M3.500 10.500l4-4 4 4" fill="none" stroke="#505050" stroke-width="2" /></svg>
            <div class="thumb"></div>
            <svg width="15" height="16" viewBox="0 0 15 16"><path d="M3.500 5.500l4 4 4-4" fill="none" stroke="#505050" stroke-width="2" /></svg>
          </div>
        </div>
        <div class="abtn"><Song t="单构件输入" /></div>
        <div class="abtn"><Song t="报表预览" /></div>
      </aside>

      <main>
        <div class="row r2"><div class="grp"><i class="handle"></i><Tools :items="modifyTools" /></div></div>
        <div class="row r3">
          <div class="grp comp"><i class="handle h8"></i><Tools :items="compTools" /></div>
          <div class="grp"><i class="handle"></i><Tools :items="axisTools" /></div>
        </div>
        <div class="row r4">
          <div class="grp"><i class="handle"></i><Tools :items="drawTools" /></div>
          <div class="grp stub"><i class="handle"></i></div>
        </div>

        <div class="view">
          <svg width="1195" height="288" viewBox="170 168 1195 288">
            <g shape-rendering="crispEdges">
              <path d="M204 168h50l-7 3h-40z" fill="#666" />
              <path d="M170 177l11 6v170l-11-12z" fill="#858585" />
              <path d="M170 341l20 19 35-12v-8h-55z" fill="#737373" />
              <g stroke="#f00" fill="none">
                <path d="M170 366L567 234M239 456L1101 168M493 456L1355 168M1168 456l197-66M1196 456l169-56" />
                <path d="M514 168l53 52M1003 168l265 263M726 378l79 78M212 352l104 104" />
              </g>
              <path d="M567 219L718 168H830L595 246z" fill="#727272" />
              <path d="M595 246L830 168H942L935 266 569 388 578 288 593 283z" fill="#5a5a5a" />
              <path d="M567 219l28 27-2 38-15 5-9 99-15-14z" fill="#4b4b4b" />
              <path d="M582 273L896 168h45L578 289l-1-3 8-5z" fill="#868686" />
              <path d="M593 281L929 168h10L593 283.500z" fill="#9c9c9c" />
              <path d="M554 374l15 14-2 42-16-15z" fill="#004800" />
              <path d="M569 388L935 266l-4 42-364 122z" fill="#005900" />
              <path d="M554 374l16 15 365-121" fill="none" stroke="#148a14" stroke-width="3" />
              <path d="M569 388L935 266" stroke="#9fe79f" stroke-width="1.500" stroke-dasharray="2 1" />
              <path :d="tickPath" fill="none" stroke="#a59c9c" />
              <path d="M562 380v21" stroke="#4fa34f" />
              <path d="M568 396h6l2-2L938 274M576 405L938 285" fill="none" stroke="#fff" stroke-width="2" />
              <path d="M568 389l7 5 2 7-2 4-6-7zM934 266l7 6v10l-3 3-5-9 8-2" fill="none" stroke="#fff" stroke-width="1.400" />
              <path d="M567 431L931 309" stroke="#f00" />
            </g>
            <g v-for="c in bubbles" :key="c[2]">
              <circle :cx="c[0]" :cy="c[1]" r="12.500" fill="none" stroke="#008a00" stroke-dasharray="3 .6" />
              <text :x="c[0]" :y="c[1] + 5" class="bub">{{ c[2] }}</text>
            </g>
            <g stroke-width="3.500">
              <path d="M225 405l-20-20" stroke="#0f0" /><path d="M198 379l10 3-7 7z" fill="#0f0" />
              <path d="M226 405l30-9" stroke="#f00" /><path d="M266 392l-8 9-3-9z" fill="#f00" />
              <path d="M225 405l2-26" stroke="#0080ff" /><path d="M228 367l4 12h-8z" fill="#0080ff" />
            </g>
            <path d="M216 364h8l-8 10h8" fill="none" stroke="#0080ff" /><path d="M210 376l4 4 5-4M214 380v5" fill="none" stroke="#0d0" /><path d="M247 382l9 8M256 382l-9 8" stroke="#c00" />
            <path d="M517 171l18 17" stroke="#f00" />
          </svg>
          <div class="panel">
            <div class="ptitle">钢筋显示控制面板</div>
            <div class="plist">
              <div v-for="c in checks" :key="c" class="chk"><svg width="11" height="11" viewBox="0 0 11 11"><path d="M.5.5h10v10H.5z" fill="#fff" stroke="#999" /><path d="M2 5.500L4.500 8 9 3" fill="none" stroke="#222" stroke-width="1.200" /></svg><Song :t="c" /></div>
            </div>
          </div>
        </div>

        <div class="row r5">
          <div class="grp"><i class="handle"></i><Tools :items="snapTools" /></div>
          <div class="grp"><i class="handle"></i><Tools :items="pointTools" /></div>
          <div class="grp offs"><i class="handle h8"></i><Tools :items="offsetTools" /></div>
        </div>

        <section class="detail">
          <div class="split"><span class="x"></span><i></i></div>
          <div class="dcol">
            <div class="grp dtools"><Tools :items="barTools" /></div>
            <div class="sheet">
              <div class="grid">
                <div v-for="(t, k) in heads" :key="'h' + k" class="th" :class="{ cur: k === 1, left: k === 15 }"><Song :t="t" /></div>
                <template v-for="(r, ri) in rows" :key="ri">
                  <div v-for="(c, ci) in r" :key="ci" class="td" :class="['row' + ri, { rh: ci === 0, name: ci === 1, dia: ci === 2, mid: ci === 3 || ci === 5 }]">
                    <svg v-if="ci === 3 && ri < 2" width="11" height="10" viewBox="0 0 11 10"><path :d="ri ? 'M5.500 0v9M3.500 2.500h4l2 1v2l-2 1h-4l-2-1v-2z' : 'M4.500 0v8M6.500 0v8M3 2.500h5l1.500 1v2L8 6.500H3l-1.500-1v-2zM2 8.500h7'" fill="none" stroke="#222" /></svg>
                    <svg v-else-if="ci === 5 && ri === 0" width="200" height="60" viewBox="415 537 200 60">
                      <path d="M488 558v-14q0-2.500 3-2.500h52v52" fill="none" stroke="#000" stroke-width="2" />
                      <text x="491" y="554" class="st">85</text><text x="514" y="555" class="st">125</text>
                      <text transform="translate(502 551) rotate(-90)" class="st">80</text><text transform="translate(534 561) rotate(-90)" class="st">861</text>
                    </svg>
                    <svg v-else-if="ci === 5 && ri === 1" width="200" height="28" viewBox="415 598 200 28">
                      <path d="M454 613h-3v4h130v-4h-4" fill="none" stroke="#000" stroke-width="2" /><text x="492" y="613" class="st" fill="#f00">3250</text>
                    </svg>
                    <Song v-else :t="c" />
                  </div>
                </template>
              </div>
              <div class="hbar">
                <svg width="18" height="16" viewBox="0 0 18 16"><path d="M11 4L7 8l4 4" fill="none" stroke="#444" stroke-width="1.700" /></svg><div class="hthumb"></div>
                <svg width="18" height="16" viewBox="0 0 18 16"><path d="M8 4l4 4-4 4" fill="none" stroke="#444" stroke-width="1.700" /></svg>
              </div>
            </div>
          </div>
        </section>
      </main>
    </div>

    <footer class="status">
      <div class="s1"><Song t="X=109826 Y=-9420" /></div><div class="s2"><Song t="层高:2.8m" /></div><div class="s3"><Song t="底标高:20.35m" /></div><div class="s4"><Song t="1(1)" /></div><div class="s5"></div><div class="s6"><Song t="185.6 FPS" /></div>
    </footer>

    <div class="task">
      <div class="start"><Ico n="win" /></div>
      <div class="search"><i class="cortana"></i><span>在这里输入你要搜索的内容</span><Ico n="smic" /></div>
      <div v-for="a in apps" :key="a.n" class="app" :class="{ act: a.act, run: a.run }" :style="{ width: a.w + 'px' }"><Ico :n="a.n" :s="24" /></div>
      <div class="tray"><span class="lk">链接</span><Ico n="up2" class="c1" /><Ico n="batt" class="c2" /><Ico n="wifi" class="c3" /><Ico n="sound" class="c4" /><Ico n="t_key" :s="24" class="c5" /><span class="ying">英</span><Ico n="sogou" /></div>
      <div class="clock"><span>11:33</span><span>2018/7/11</span></div>
      <div class="msg"><Ico n="t_msg" :s="24" /><b>1</b></div>
    </div>

    <div class="ime">
      <Ico n="sogou" class="big" />
      <div class="imebox"><b>英</b><span class="punc">•,</span><Ico n="smile" /><Ico n="bmic" /><Ico n="bkey" /><Ico n="person" /><Ico n="shirt" /><Ico n="wrench" /></div>
    </div>
  </div>
</template>

<style>
body { margin: 0; }
.ico { display: block; flex: none; }
.song { display: inline-flex; white-space: pre; font: 12px/16px "Liberation Mono", "Noto Sans CJK SC", monospace; }
.song i { font-style: normal; letter-spacing: -1.2px; }
.song b { font-weight: 400; font-family: "Noto Sans CJK SC", sans-serif; }
.tri { width: 0; height: 0; border: 3px solid transparent; border-top: 3px solid #111; border-bottom: 0; flex: none; }
.tri.up { border-top: 0; border-bottom: 3px solid #111; }
.tbtn { display: flex; align-items: center; flex: none; box-sizing: border-box; height: 24px; padding-right: 7px; }
.tbtn .ico + span { margin-left: 4px; }
.tbtn.m > span:last-child { margin-left: 2px; }
.tbtn.s > span:last-child { margin-left: 6px; }
.tbtn span { display: flex; align-items: center; }
.tbtn.on { margin: 0 3px 0 -3px; padding: 0 3px 0 2px; border: 1px solid #0a77cf; background: #dfeaf5; }
.tbtn.hot { margin: 0 3px 0 -3px; padding: 0 0 0 2px; border: 1px solid #0a77cf; background: #b5d8f5; }
.tbtn.hot em { display: flex; align-items: center; justify-content: center; width: 10px; height: 22px; margin-left: 4px; border-left: 1px solid #0a77cf; }
.tbtn.dis, .tlab.dis { color: #8b8b8b; }
.tbtn.dis .ico { fill: none; stroke: #adadad; }
.tbtn.dis .tri { border-top-color: #8b8b8b; }
.tsep { width: 1px; height: 16px; margin: 0 4px 0 1px; background: #b8b8b8; flex: none; }
.tgap { flex: none; }
.tmore { font-size: 14px; font-weight: 600; align-self: flex-start; line-height: 14px; flex: none; }
.tarr { display: flex; }
.tlab { flex: none; }
.tlab.dis { font-size: 13px; }
.tlab.wide { letter-spacing: .3px; }
.tcheck { width: 9px; height: 9px; border: 1px solid #999; margin-right: 9px; flex: none; }
.tcombo { display: flex; align-items: center; box-sizing: border-box; height: 23px; background: #fff; padding-left: 2px; flex: none; }
.tcombo .ico + span { margin-left: 2px; }
.tcombo em { margin-left: auto; width: 12px; height: 23px; background: #f5f5f5; display: flex; align-items: center; justify-content: center; }
.tnum { display: flex; align-items: center; justify-content: flex-end; box-sizing: border-box; height: 23px; border: 1px solid #707070; background: #f3f3f3; color: #777; flex: none; }
.tnum em { display: flex; flex-direction: column; gap: 9px; margin: 0 4px 0 9px; opacity: .6; }
</style>

<style scoped>
.win { position: relative; width: 1366px; height: 768px; overflow: hidden; background: #f0f0f0; color: #000; font: 12px/16px "Open Sans", "Noto Sans CJK SC", sans-serif; white-space: nowrap; display: flex; flex-direction: column; }
.title { height: 23px; flex: none; background: #fff; display: flex; align-items: center; padding-left: 3px; position: relative; }
.ttext { margin-left: 4px; letter-spacing: .32px; }
.winbtns { margin-left: auto; margin-right: 19px; margin-top: -3px; }
.ball { position: absolute; left: 971px; top: -29px; width: 44px; height: 18px; padding-top: 27px; border: 2px solid #d5d5d5; outline: 1px solid #777; border-radius: 50%; background: #41c95c; color: #fff; font-weight: 700; font-size: 12px; line-height: 16px; text-align: center; }
.menu { height: 30px; flex: none; display: flex; align-items: center; padding-left: 7px; position: relative; }
.mi { flex: none; }
.grp { display: flex; align-items: center; background: linear-gradient(#fdfdfd, #f1f1f1); flex: none; border-radius: 2px; }
.notice { width: 159px; height: 28px; padding-left: 29px; color: #633300; }
.account { width: 236px; height: 28px; margin-left: 1px; padding-left: 4px; }
.phone { margin-left: 5px; width: 82px; } .bean { margin: 0 7px 0 9px; width: 47px; }
.account .tmore { margin-left: 35px; }
.row { display: flex; align-items: center; flex: none; }
.r1 { height: 31px; padding-left: 2px; }
.r1 .grp { height: 28px; }
.g1 { width: 146px; padding-left: 3px; box-sizing: content-box; }
.g2 { width: 549px; margin-left: 2px; }
.g3 { width: 661px; margin-left: 3px; }
.g3 > .tmore { margin-left: auto; margin-right: 4px; }
.body { display: flex; height: 623px; flex: none; }
aside { width: 165px; flex: none; display: flex; flex-direction: column; border-right: 1px solid #d8d8d8; }
.ahead { height: 15px; background: #0054e3; color: #fff; display: flex; align-items: center; justify-content: space-between; font: 12.600px/15px "Noto Sans CJK SC", sans-serif; padding-right: 4px; margin-bottom: 2px; flex: none; }
.abtn { height: 20px; display: flex; align-items: center; justify-content: center; border: 1px solid #9c9c9c; border-right-color: #8a8a8a; box-shadow: inset 1px 1px #fff; margin: 0 1px 0 0; flex: none; }
.abtn + .abtn { border-top: 0; height: 21px; }
.pm { height: 27px; padding: 6px 0 0 7px; box-sizing: border-box; flex: none; }
.tree { height: 485px; border: 1px solid #828790; border-width: 2px 1px 2px 2px; margin-right: 1px; background: #fff; display: flex; overflow: hidden; flex: none; }
.nodes { width: 144px; overflow: hidden; padding-left: 1px; box-sizing: border-box; }
.node { display: flex; height: 16px; align-items: center; }
.node .song { line-height: 16px; }
.cell { display: flex; align-items: center; gap: 4px; height: 16px; }
.par .cell { gap: 5px; }
.node:not(.par) .cell { margin-left: -1px; }
.sel .cell { background: #d9d9d9; padding-right: 1px; }
.mk { margin-left: 1px; }
.sel .mk { margin-left: 0; }
.pad { width: 23px; }
.chev { flex: none; }
.v0 { width: 12px; flex: none; } .v1 { width: 18px; height: 16px; border-left: 1px dotted #888; flex: none; }
.v2 { width: 11px; height: 16px; border-left: 1px dotted #888; flex: none; background: repeating-linear-gradient(90deg, #999 0 1px, transparent 1px 2px) 0 8px / 100% 1px no-repeat; }
.last .v2 { height: 8px; align-self: flex-start; background-position: 0 7px; }
.cut .mk { margin-left: 24px; }
.new { background: #ffe000; font-weight: 700; line-height: 14px; font-size: 11px; }
.vbar { width: 15px; margin-right: 1px; background: #f0f0f0; display: flex; flex-direction: column; padding: 1px 0 0; }
.thumb { height: 293px; background: #cdcdcd; margin-top: 147px; margin-bottom: 10px; flex: none; }
main { flex: 1; display: flex; flex-direction: column; min-width: 0; padding-left: 4px; }
main .grp { margin-left: 1px; }
.handle { width: 2px; height: 15px; margin: 0 4px; background: repeating-linear-gradient(#b5b5b5 0 2px, transparent 2px 4px); flex: none; }
.handle.h8 { margin-right: 2px; }
.r2 { height: 27px; } .r2 .grp { height: 26px; margin-top: -1px; }
.r3 { height: 28px; } .r3 .grp { height: 26px; }
.comp { margin-right: 74px; width: 565px; }
.r4 { height: 29px; } .r4 .grp { height: 27px; }
.r4 .stub { width: 29px; margin-left: auto; margin-right: 4px; }
.view { position: relative; width: 1195px; height: 288px; background: #000; flex: none; }
.view > svg { display: block; }
.bub { fill: #d8d8d8; font: 14px "Liberation Mono", monospace; text-anchor: middle; }
.panel { position: absolute; left: 10px; top: 2px; width: 164px; height: 176px; background: #fff; border: 1px solid #555; border-right: 2px solid #888; display: flex; flex-direction: column; }
.ptitle { height: 31px; line-height: 30px; padding-left: 7px; color: #999; }
.plist { flex: 1; border: 1px solid #777b84; margin: 0 0 1px 1px; padding: 1px 0 0 2px; }
.chk { display: flex; align-items: center; height: 12px; gap: 4px; }
.chk svg { flex: none; }
.r5 { height: 34px; align-items: flex-start; padding-top: 1px; box-sizing: border-box; } .r5 .grp { height: 28px; }
.r5 .grp + .grp { margin-left: 0; }
.r5 .grp + .grp.offs { margin-left: 3px; }
.offs .tnum { font-size: 13px; }
.detail { display: flex; flex: 1; }
.split { width: 12px; display: flex; flex-direction: column; align-items: center; }
.split .x { width: 9px; height: 9px; border: 1px solid #555; background: linear-gradient(45deg, transparent 44%, #222 44% 56%, transparent 56%), linear-gradient(-45deg, transparent 44%, #222 44% 56%, #e9c8c4 56%); }
.split i { width: 7px; flex: 1; margin: 4px 0 5px; background: repeating-linear-gradient(90deg, transparent 0 2px, #f0f0f0 2px 5px), repeating-linear-gradient(#b4b4b4 0 2px, transparent 2px 5px); }
.dcol { flex: 1; display: flex; flex-direction: column; min-width: 0; }
main .dtools { height: 25px; margin: 0 3px 1px 1px; padding-left: 2px; width: 1178px; }
.sheet { width: 1180px; height: 188px; border: 1px solid #a0a0a0; background: #fff; display: flex; flex-direction: column; }
.grid { display: grid; grid-template-columns: 34px 73px 56px 36px 33px 201px 166px 156px 61px 38px 39px 49px 61px 61px 71px 45px; grid-template-rows: 20px 61px 29px 19px; }
.th, .td { border-right: 1px solid #c0c0c0; border-bottom: 1px solid #c0c0c0; display: flex; align-items: center; box-sizing: border-box; overflow: hidden; }
.th { justify-content: center; background: linear-gradient(#fff, #f0f0f0); }
.th.left { justify-content: flex-start; padding-left: 11px; }
.cur { background: linear-gradient(#f9d79c, #f2b95c); color: #700050; }
.td { padding-left: 1px; }
.row0, .row1 { background: #ccffd9; }
.rh { background: linear-gradient(90deg, #fff, #f0f0f0); justify-content: center; padding: 0 8px 0 0; }
.rh.row0 { background: #ffd28a; color: #600060; padding-right: 0; }
.name { border-right: 1px solid #000; padding-left: 2px; }
.name.row0 { background: #b3f0df; }
.mid { padding: 0; justify-content: center; }
.td:nth-child(16n) { border-right: 0; }
.st { font: 12px "Liberation Mono", monospace; letter-spacing: -1.2px; }
.hbar { display: flex; height: 16px; margin-top: auto; margin-bottom: 1px; background: #f0f0f0; }
.hthumb { width: 823px; background: #cdcdcd; margin-right: auto; }
.status { height: 21px; flex: none; display: flex; gap: 2px; padding-top: 1px; box-sizing: border-box; }
.status div { box-sizing: border-box; border: 1px solid #c9c9c9; background: linear-gradient(#fbfbfb, #f2f2f2); padding: 1px 0 0 1px; overflow: hidden; height: 19px; }
.s1 { width: 148px; } .s2, .s3, .s4 { width: 78px; } .s3 { width: 98px; } .s4 { width: 49px; } .s5 { flex: 1; } .s6 { width: 70px; }
.task { height: 40px; flex: none; background: #020c10; display: flex; color: #fff; }
.start { width: 48px; background: #000; display: flex; align-items: center; justify-content: center; flex: none; }
.search { width: 344px; background: #333; display: flex; align-items: center; color: #999; font-size: 14px; flex: none; }
.cortana { width: 17px; height: 17px; border: 2.500px solid #eee; border-radius: 50%; margin: 0 6px 0 8px; }
.search span { margin-left: 1px; }
.search .ico { margin-left: auto; margin-right: 12px; }
.app { display: flex; align-items: center; justify-content: center; position: relative; flex: none; }
.app.act { background: #38434a; border-bottom: 2px solid #7cc0f7; box-sizing: border-box; padding-top: 2px; }
.app.run { background: linear-gradient(#7cc0f7, #7cc0f7) center bottom / 40px 2px no-repeat; }
.tray { width: 254px; display: flex; align-items: center; box-sizing: border-box; padding-left: 36px; flex: none; }
.lk { width: 34px; } .c1 { margin-right: 8px; } .c2 { margin-right: 10px; } .c3 { margin-right: 6px; } .c4 { margin-right: 7px; } .ying { font-size: 14px; margin: 0 13px 0 9px; }
.clock { width: 69px; display: flex; flex-direction: column; align-items: center; justify-content: center; line-height: 19px; flex: none; }
.msg { width: 51px; box-sizing: border-box; border-right: 1px solid #555; background: #000; display: flex; align-items: center; padding-left: 10px; position: relative; flex: none; }
.msg b { position: absolute; left: 21px; top: 18px; width: 14px; height: 14px; border: 1px solid #888; border-radius: 50%; background: #222; font-size: 11px; line-height: 14px; text-align: center; }
.ime { position: absolute; left: 867px; top: 53px; display: flex; align-items: center; height: 29px; }
.big { width: 29px; height: 29px; position: relative; }
.imebox { box-sizing: border-box; width: 181px; height: 24px; margin: 2px 0 0 -3px; border: 1px solid #a9bcd4; background: #fff; display: flex; align-items: center; gap: 6px; padding-left: 7px; color: #1b73c8; }
.imebox b { font-size: 15px; } .punc { width: 16px; font-weight: 700; font-size: 15px; }
</style>
